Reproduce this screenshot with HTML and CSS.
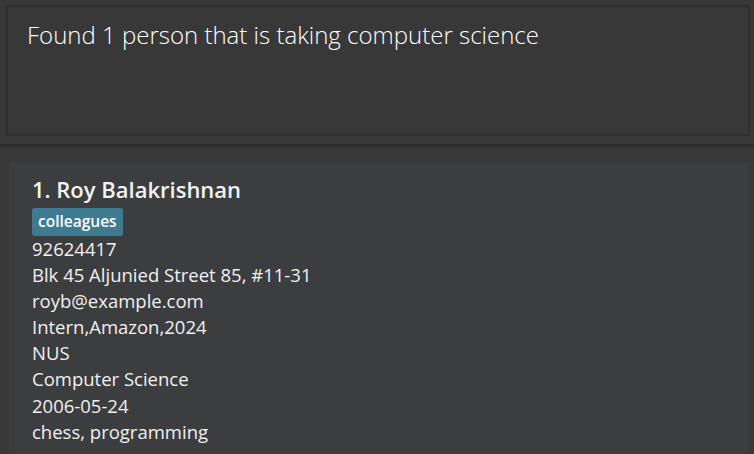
FILE: index.html
```html
<!DOCTYPE html>
<html>
<head>
<meta charset="utf-8">
<link rel="stylesheet" href="styles.css">
</head>
<body>
<div class="result-pane">
  <div class="result-box">Found 1 person that is taking computer science</div>
</div>
<div class="divider"></div>
<div class="list-pane">
  <div class="card">
    <div class="name">1. Roy Balakrishnan</div>
    <div class="tags"><span class="tag">colleagues</span></div>
    <div class="field">92624417</div>
    <div class="field">Blk 45 Aljunied Street 85, #11-31</div>
    <div class="field">royb@example.com</div>
    <div class="field">Intern,Amazon,2024</div>
    <div class="field">NUS</div>
    <div class="field">Computer Science</div>
    <div class="field">2006-05-24</div>
    <div class="field">chess, programming</div>
  </div>
</div>
</body>
</html>
```
FILE: styles.css
```css
html, body {
  margin: 0;
  padding: 0;
  background: #383838;
  height: 100%;
  overflow: hidden;
  font-family: "Open Sans", "Noto Sans", sans-serif;
}
.result-pane {
  padding: 5px 4px 0 6px;
}
.result-box {
  border: 2px solid #2f2f2f;
  background: #383838;
  color: #ffffff;
  font-weight: 300;
  font-size: 24px;
  line-height: 30px;
  padding: 13px 0 0 19px;
  box-sizing: border-box;
  height: 131px;
}
.divider {
  margin-top: 8px;
  height: 3px;
  background: #2e2e2e;
}
.list-pane {
  padding: 16px 5px 0 9px;
}
.card {
  background: #3c3d3f;
  padding: 11px 0 20px 23px;
  color: #ffffff;
}
.name {
  font-size: 22px;
  font-weight: 600;
  line-height: 30px;
  color: #f2f2f2;
}
.tags {
  margin-top: 4px;
  height: 28px;
}
.tag {
  display: inline-block;
  background: #3e7b91;
  color: #ffffff;
  font-size: 15.5px;
  font-weight: 600;
  padding: 2px 6px 3px 6px;
  line-height: 23px;
  border-radius: 3px;
}
.field {
  font-size: 18.5px;
  line-height: 26.1px;
  color: #f0f0f0;
}
```
